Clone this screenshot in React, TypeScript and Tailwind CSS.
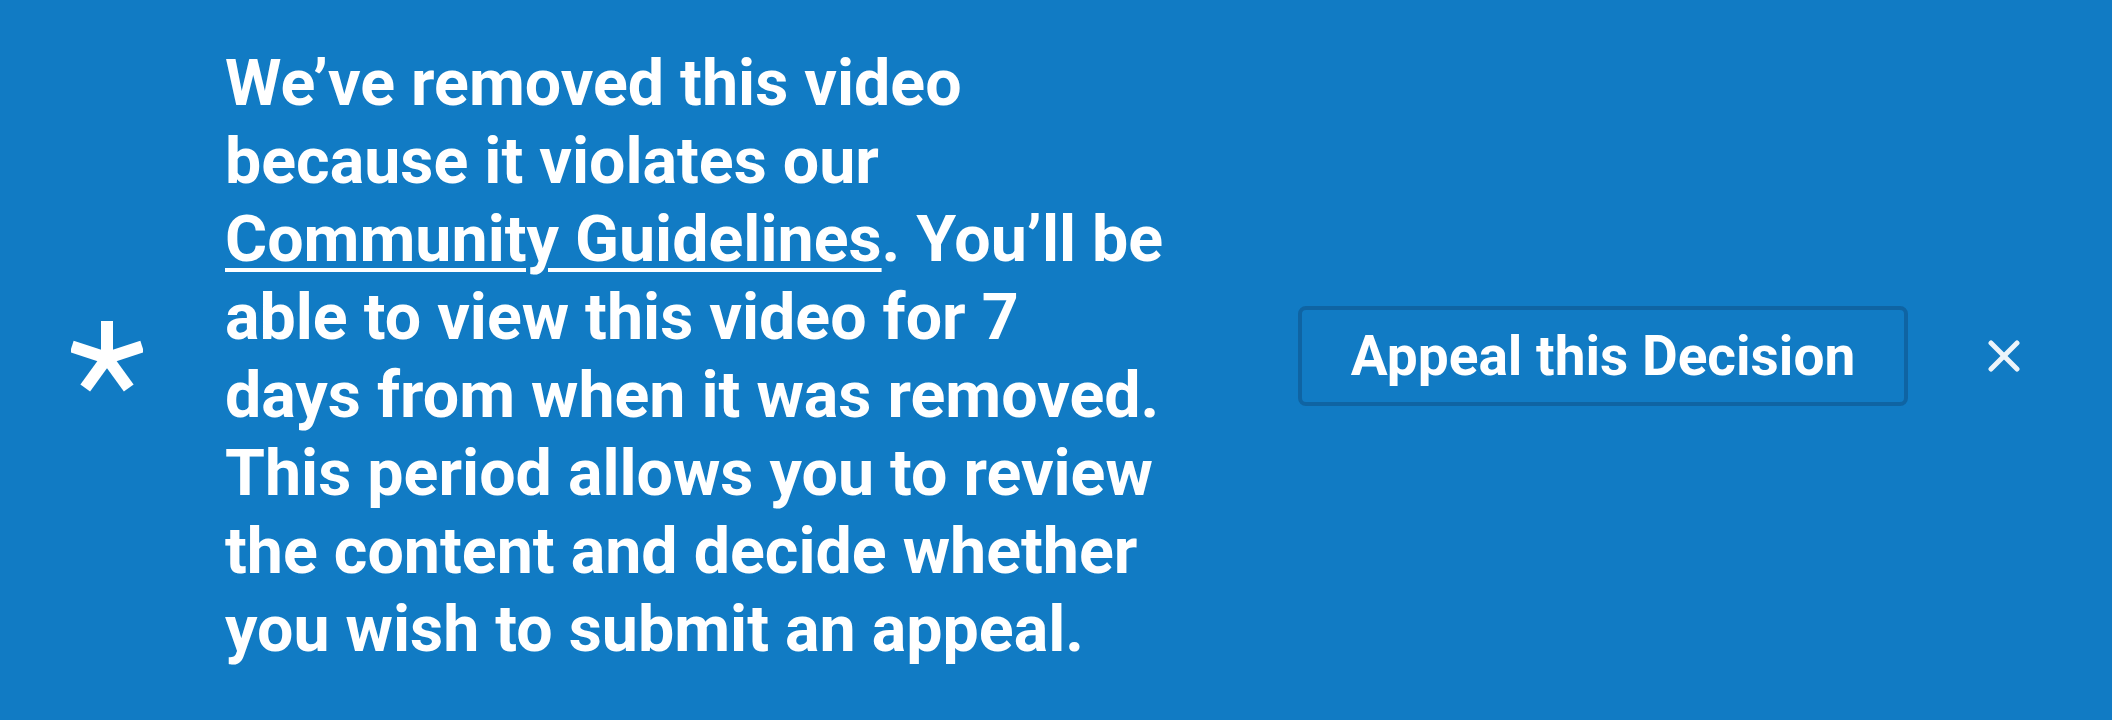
const Asterisk = () => (
  <svg width="72" height="74" viewBox="-36 -39 72 74" className="shrink-0">
    <g stroke="#ffffff" strokeWidth="12" strokeLinecap="butt">
      {[0, 72, 144, 216, 288].map((a) => (
        <line key={a} x1="0" y1="0" x2="0" y2="-37" transform={`rotate(${a})`} />
      ))}
    </g>
  </svg>
);

const CloseIcon = () => (
  <svg width="40" height="40" viewBox="0 0 40 40" className="shrink-0">
    <g stroke="#ffffff" strokeWidth="5" strokeLinecap="round" opacity="0.92">
      <line x1="7" y1="7" x2="33" y2="33" />
      <line x1="33" y1="7" x2="7" y2="33" />
    </g>
  </svg>
);

export default function App() {
  return (
    <div
      className="w-[2112px] h-[720px] bg-[#117bc4] text-white flex items-center pb-[8px]"
      style={{ fontFamily: 'Roboto, "Liberation Sans", sans-serif' }}
    >
      {/* Icon */}
      <div className="w-[225px] flex justify-start pl-[71px]">
        <Asterisk />
      </div>

      {/* Message */}
      <p className="w-[941px] shrink-0 text-[64.5px] leading-[78px] font-bold">
        We’ve removed this video because it violates our{' '}
        <a href="#" className="underline decoration-[4px] underline-offset-[7px]">
          Community Guidelines
        </a>
        . You’ll be able to view this video for 7 days from when it was removed. This period
        allows you to review the content and decide whether you wish to submit an appeal.
      </p>

      {/* Actions */}
      <div className="ml-[132px] flex items-center">
        <button className="w-[610px] h-[100px] rounded-[8px] border-[4px] border-[#0f64a3] bg-[#117bc4] text-[55px] font-bold text-white flex items-center justify-center">
          Appeal this Decision
        </button>
        <button className="ml-[76px] w-[40px] h-[40px] flex items-center justify-center">
          <CloseIcon />
        </button>
      </div>
    </div>
  );
}
